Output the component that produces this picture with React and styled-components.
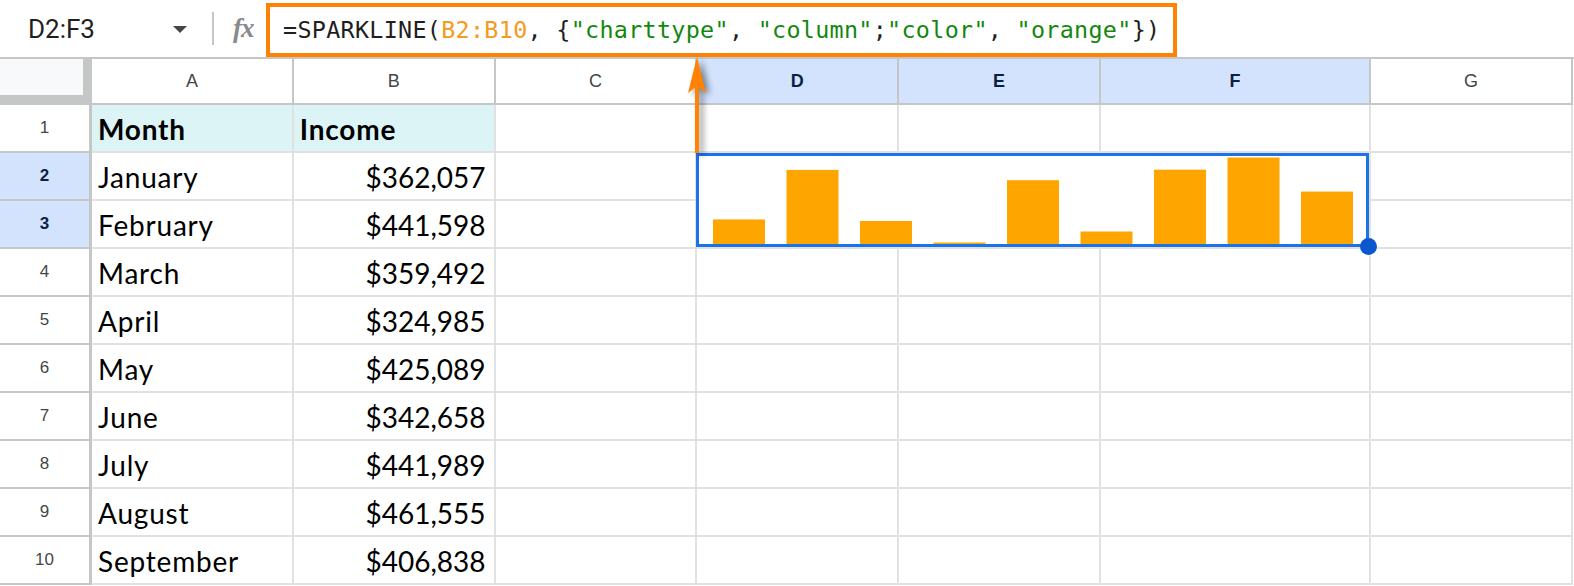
import React from "react";
import styled, { createGlobalStyle, css } from "styled-components";

const GlobalStyle = createGlobalStyle`
  html, body {
    margin: 0;
    padding: 0;
    background: #ffffff;
  }
  * {
    box-sizing: border-box;
  }
`;

const HEAD_LINE = "#c4c7c5";
const CELL_LINE = "#e1e1e1";
const SELECT_BG = "#d3e3fd";

const Page = styled.div`
  position: relative;
  width: 1574px;
  height: 586px;
  overflow: hidden;
  background: #fff;
`;

const FormulaBar = styled.div`
  display: flex;
  align-items: center;
  height: 57px;
`;

const NameBox = styled.div`
  width: 196px;
  height: 100%;
  padding: 0 9px 0 28px;
  display: flex;
  align-items: center;
  justify-content: space-between;
  font-family: Roboto, "Liberation Sans", sans-serif;
  font-size: 26px;
  color: #1f1f1f;
`;

const Caret = styled.span`
  width: 0;
  height: 0;
  border-left: 7px solid transparent;
  border-right: 7px solid transparent;
  border-top: 7px solid #444746;
  margin-top: 2px;
`;

const Divider = styled.div`
  width: 2px;
  height: 33px;
  margin-left: 16px;
  background: ${HEAD_LINE};
`;

const Fx = styled.span`
  margin-left: 19px;
  width: 26px;
  font-family: "Liberation Serif", "DejaVu Serif", serif;
  font-style: italic;
  font-weight: bold;
  font-size: 27px;
  color: #8a8a8a;
  letter-spacing: -1px;
`;

const FormulaBox = styled.div`
  align-self: flex-end;
  margin-left: 7px;
  width: 911px;
  height: 54px;
  border: 4px solid #ff8205;
  display: flex;
  align-items: center;
  padding-left: 13px;
  font-family: "DejaVu Sans Mono", "Liberation Mono", monospace;
  font-size: 23.4px;
  letter-spacing: 0.3px;
  color: #1f1f1f;
  white-space: pre;
`;

const Token = styled.span`
  color: ${(p) => (p.$kind === "range" ? "#f39b1c" : p.$kind === "str" ? "#14870f" : "#1f1f1f")};
`;

const Sheet = styled.div`
  display: grid;
  grid-template-columns: 92px repeat(5, 201.8px) 270px 202px;
  grid-template-rows: 46px repeat(10, 48px);
  border-top: 2px solid ${HEAD_LINE};
`;

const Corner = styled.div`
  background: #f8f9fa;
  border-right: 9px solid ${HEAD_LINE};
  border-bottom: 10px solid ${HEAD_LINE};
`;

const ColHead = styled.div`
  display: flex;
  align-items: center;
  justify-content: center;
  border-right: 2px solid ${HEAD_LINE};
  border-bottom: 2px solid ${HEAD_LINE};
  font-family: "Liberation Sans", Arial, sans-serif;
  font-size: 18px;
  color: #444746;
  ${(p) =>
    p.$sel &&
    css`
      background: ${SELECT_BG};
      color: #0b1f44;
      font-weight: bold;
    `}
`;

const RowHead = styled.div`
  display: flex;
  align-items: center;
  justify-content: center;
  border-right: 3px solid ${HEAD_LINE};
  border-bottom: 2px solid ${HEAD_LINE};
  font-family: "Liberation Sans", Arial, sans-serif;
  font-size: 17px;
  color: #444746;
  ${(p) =>
    p.$sel &&
    css`
      background: ${SELECT_BG};
      color: #0b1f44;
      font-weight: bold;
    `}
`;

const Cell = styled.div`
  display: flex;
  align-items: center;
  justify-content: ${(p) => (p.$right ? "flex-end" : "flex-start")};
  padding: 2px 8px 0 6px;
  border-right: 2px solid ${CELL_LINE};
  border-bottom: 2px solid ${CELL_LINE};
  background: ${(p) => (p.$header ? "#ddf4f7" : "#fff")};
  font-family: Lato, "Open Sans", sans-serif;
  font-size: 28px;
  letter-spacing: ${(p) => (p.$right ? "0" : "0.8px")};
  font-weight: ${(p) => (p.$header ? 700 : 400)};
  color: #000;
  white-space: nowrap;
`;

const SparkCell = styled.div`
  position: relative;
  grid-column: 5 / 8;
  grid-row: 3 / 5;
  border-right: 2px solid ${CELL_LINE};
  border-bottom: 2px solid ${CELL_LINE};
`;

const Selection = styled.div`
  position: absolute;
  left: -1px;
  top: 0;
  right: 0;
  bottom: 0;
  border: 3px solid #1a73e8;
  pointer-events: none;
`;

const Handle = styled.span`
  position: absolute;
  right: -11px;
  bottom: -11px;
  width: 17px;
  height: 17px;
  border-radius: 50%;
  background: #0b57d0;
`;

const Chart = styled.svg`
  display: block;
`;

const Arrow = styled.svg`
  position: absolute;
  left: 688px;
  top: 57px;
  overflow: visible;
  filter: drop-shadow(4px 2px 3px rgba(0, 0, 0, 0.45));
`;

const cols = ["A", "B", "C", "D", "E", "F", "G"];
const data = [
  ["January", 362057],
  ["February", 441598],
  ["March", 359492],
  ["April", 324985],
  ["May", 425089],
  ["June", 342658],
  ["July", 441989],
  ["August", 461555],
  ["September", 406838],
];

const money = (v) => "$" + v.toLocaleString("en-US");

function Sparkline() {
  const vals = data.map((d) => d[1]);
  const min = Math.min(...vals);
  const max = Math.max(...vals);
  return (
    <Chart width="671" height="94" viewBox="0 0 671 94">
      {vals.map((v, i) => {
        const h = 2 + ((v - min) / (max - min)) * 85;
        return (
          <rect key={i} x={16 + i * 73.5} y={91.5 - h} width="52" height={h} fill="#ffa500" />
        );
      })}
    </Chart>
  );
}

export default function App() {
  const rows = [];
  for (let r = 1; r <= 10; r++) {
    const sel = r === 2 || r === 3;
    rows.push(
      <RowHead key={"h" + r} $sel={sel}>
        {r}
      </RowHead>
    );
    if (r === 1) {
      rows.push(
        <Cell key="a1" $header>
          Month
        </Cell>,
        <Cell key="b1" $header>
          Income
        </Cell>
      );
    } else {
      const [m, v] = data[r - 2];
      rows.push(
        <Cell key={"a" + r}>{m}</Cell>,
        <Cell key={"b" + r} $right>
          {money(v)}
        </Cell>
      );
    }
    rows.push(<Cell key={"c" + r} />);
    if (r === 2) {
      rows.push(
        <SparkCell key="spark">
          <Sparkline />
          <Selection>
            <Handle />
          </Selection>
        </SparkCell>
      );
    } else if (r !== 3) {
      rows.push(<Cell key={"d" + r} />, <Cell key={"e" + r} />, <Cell key={"f" + r} />);
    }
    rows.push(<Cell key={"g" + r} />);
  }

  return (
    <Page>
      <GlobalStyle />
      <FormulaBar>
        <NameBox>
          D2:F3
          <Caret />
        </NameBox>
        <Divider />
        <Fx>fx</Fx>
        <FormulaBox>
          <Token>=SPARKLINE(</Token>
          <Token $kind="range">B2:B10</Token>
          <Token>, {"{"}</Token>
          <Token $kind="str">"charttype"</Token>
          <Token>, </Token>
          <Token $kind="str">"column"</Token>
          <Token>;</Token>
          <Token $kind="str">"color"</Token>
          <Token>, </Token>
          <Token $kind="str">"orange"</Token>
          <Token>{"})"}</Token>
        </FormulaBox>
      </FormulaBar>
      <Sheet>
        <Corner />
        {cols.map((c) => (
          <ColHead key={c} $sel={c === "D" || c === "E" || c === "F"}>
            {c}
          </ColHead>
        ))}
        {rows}
      </Sheet>
      <Arrow width="18" height="96" viewBox="0 0 18 96">
        <rect x="7" y="26" width="4" height="70" fill="#ff8205" />
        <polygon points="9,0 18,36 9,29 0,36" fill="#ff8205" />
      </Arrow>
    </Page>
  );
}
